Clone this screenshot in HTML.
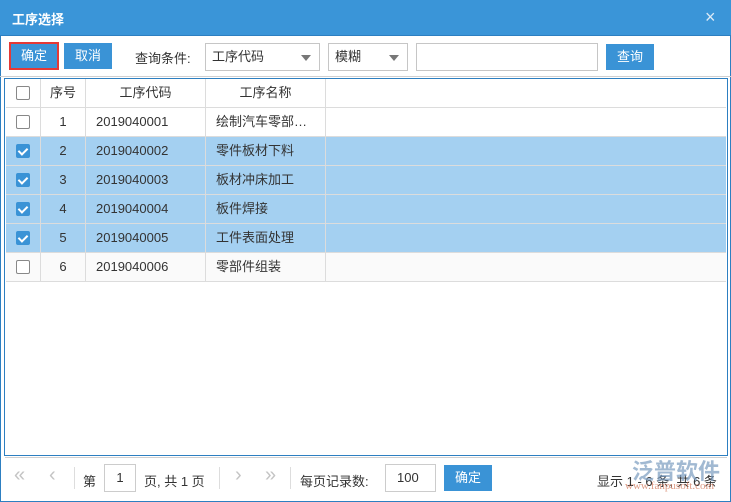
<!DOCTYPE html><html><head><meta charset="utf-8"><style>
*{margin:0;padding:0;box-sizing:border-box}
body{width:731px;height:502px;background:#fff;font-family:"Liberation Sans","Noto Sans CJK SC",sans-serif;font-size:13px;color:#333;position:relative;overflow:hidden}
.a{position:absolute}
.btn{position:absolute;background:#3a93d6;color:#fff;text-align:center;font-size:13px}
.sel{position:absolute;border:1px solid #c6c6c6;background:#fff;height:28px;line-height:26px;padding-left:6px}
.tri{position:absolute;right:8px;top:11px;width:0;height:0;border-left:5px solid transparent;border-right:5px solid transparent;border-top:6px solid #777}
.row{position:absolute;left:6px;width:720px;height:29px;border-bottom:1px solid #dcdcdc;line-height:28px}
.row div{position:absolute;top:0;height:28px;border-right:1px solid #dcdcdc}
.cb{position:absolute;left:10px;top:7px;width:14px;height:14px;border:1px solid #888;border-radius:2px;background:#fff}
.ck{background:#3a93d6;border-color:#3a93d6}
.ck:after{content:"";position:absolute;left:3px;top:1px;width:4px;height:7px;border:solid #fff;border-width:0 2px 2px 0;transform:rotate(45deg)}
.s{background:#a4d0f1}
.ar{position:absolute;top:464px;color:#c4c4c4;font-size:20px}
</style></head><body>
<div class="a" style="left:0;top:0;width:731px;height:502px;border:1px solid #2d7fc1"></div>
<div class="a" style="left:0;top:0;width:731px;height:36px;background:#3a95d8;border-bottom:1px solid #2d7fc1"></div>
<div class="a" style="left:12px;top:9px;color:#fff;font-weight:bold;font-size:13px">工序选择</div>
<div class="a" style="left:705px;top:7px;color:#dceaf6;font-size:18px">×</div>
<div class="btn" style="left:9px;top:42px;width:50px;height:28px;border:2px solid #e53935;line-height:24px">确定</div>
<div class="btn" style="left:64px;top:43px;width:48px;height:26px;line-height:26px">取消</div>
<div class="a" style="left:135px;top:48px">查询条件:</div>
<div class="sel" style="left:205px;top:43px;width:115px">工序代码<span class="tri"></span></div>
<div class="sel" style="left:328px;top:43px;width:80px">模糊<span class="tri"></span></div>
<div class="sel" style="left:416px;top:43px;width:182px"></div>
<div class="btn" style="left:606px;top:44px;width:48px;height:26px;line-height:26px">查询</div>
<div class="a" style="left:0;top:76px;width:731px;height:1px;background:#d0d0d0"></div>
<div class="a" style="left:4px;top:78px;width:724px;height:378px;border:1px solid #2d7fc1"></div>
<div class="row" style="top:79px;background:#fff"><div style="left:0;width:35px"><span class="cb"></span></div><div style="left:35px;width:45px;text-align:center">序号</div><div style="left:80px;width:120px;text-align:center">工序代码</div><div style="left:200px;width:120px;text-align:center">工序名称</div></div>
<div class="row" style="top:108px"><div style="left:0;width:35px"><span class="cb"></span></div><div style="left:35px;width:45px;text-align:center">1</div><div style="left:80px;width:120px;padding-left:10px">2019040001</div><div style="left:200px;width:120px;padding-left:10px">绘制汽车零部…</div></div>
<div class="row s" style="top:137px"><div style="left:0;width:35px"><span class="cb ck"></span></div><div style="left:35px;width:45px;text-align:center">2</div><div style="left:80px;width:120px;padding-left:10px">2019040002</div><div style="left:200px;width:120px;padding-left:10px">零件板材下料</div></div>
<div class="row s" style="top:166px"><div style="left:0;width:35px"><span class="cb ck"></span></div><div style="left:35px;width:45px;text-align:center">3</div><div style="left:80px;width:120px;padding-left:10px">2019040003</div><div style="left:200px;width:120px;padding-left:10px">板材冲床加工</div></div>
<div class="row s" style="top:195px"><div style="left:0;width:35px"><span class="cb ck"></span></div><div style="left:35px;width:45px;text-align:center">4</div><div style="left:80px;width:120px;padding-left:10px">2019040004</div><div style="left:200px;width:120px;padding-left:10px">板件焊接</div></div>
<div class="row s" style="top:224px"><div style="left:0;width:35px"><span class="cb ck"></span></div><div style="left:35px;width:45px;text-align:center">5</div><div style="left:80px;width:120px;padding-left:10px">2019040005</div><div style="left:200px;width:120px;padding-left:10px">工件表面处理</div></div>
<div class="row" style="top:253px;background:#fafafa"><div style="left:0;width:35px"><span class="cb"></span></div><div style="left:35px;width:45px;text-align:center">6</div><div style="left:80px;width:120px;padding-left:10px">2019040006</div><div style="left:200px;width:120px;padding-left:10px">零部件组装</div></div>
<div class="a" style="left:5px;top:457px;width:722px;height:1px;background:#d0d0d0"></div>
<div class="ar" style="left:14px">«</div>
<div class="ar" style="left:49px">‹</div>
<div class="a" style="left:74px;top:467px;width:1px;height:22px;background:#ddd"></div>
<div class="a" style="left:83px;top:471px">第</div>
<div class="a" style="left:104px;top:464px;width:32px;height:28px;border:1px solid #ccc;text-align:center;line-height:26px">1</div>
<div class="a" style="left:144px;top:471px">页, 共 1 页</div>
<div class="a" style="left:219px;top:467px;width:1px;height:22px;background:#ddd"></div>
<div class="ar" style="left:235px">›</div>
<div class="ar" style="left:265px">»</div>
<div class="a" style="left:290px;top:467px;width:1px;height:22px;background:#ddd"></div>
<div class="a" style="left:300px;top:471px">每页记录数:</div>
<div class="a" style="left:385px;top:464px;width:51px;height:28px;border:1px solid #ccc;line-height:26px;padding-left:11px">100</div>
<div class="btn" style="left:444px;top:465px;width:48px;height:26px;line-height:26px">确定</div>
<div class="a" style="left:597px;top:471px">显示 1 - 6 条, 共 6 条</div>
<div class="a" style="left:632px;top:454px;color:#7a9cc0;font-size:22px;font-weight:bold;opacity:.7">泛普软件</div>
<div class="a" style="left:625px;top:480px;color:#d07050;font-size:11px;font-family:'Liberation Serif',serif;opacity:.7">www.fanpusoft.com</div>
</body></html>
